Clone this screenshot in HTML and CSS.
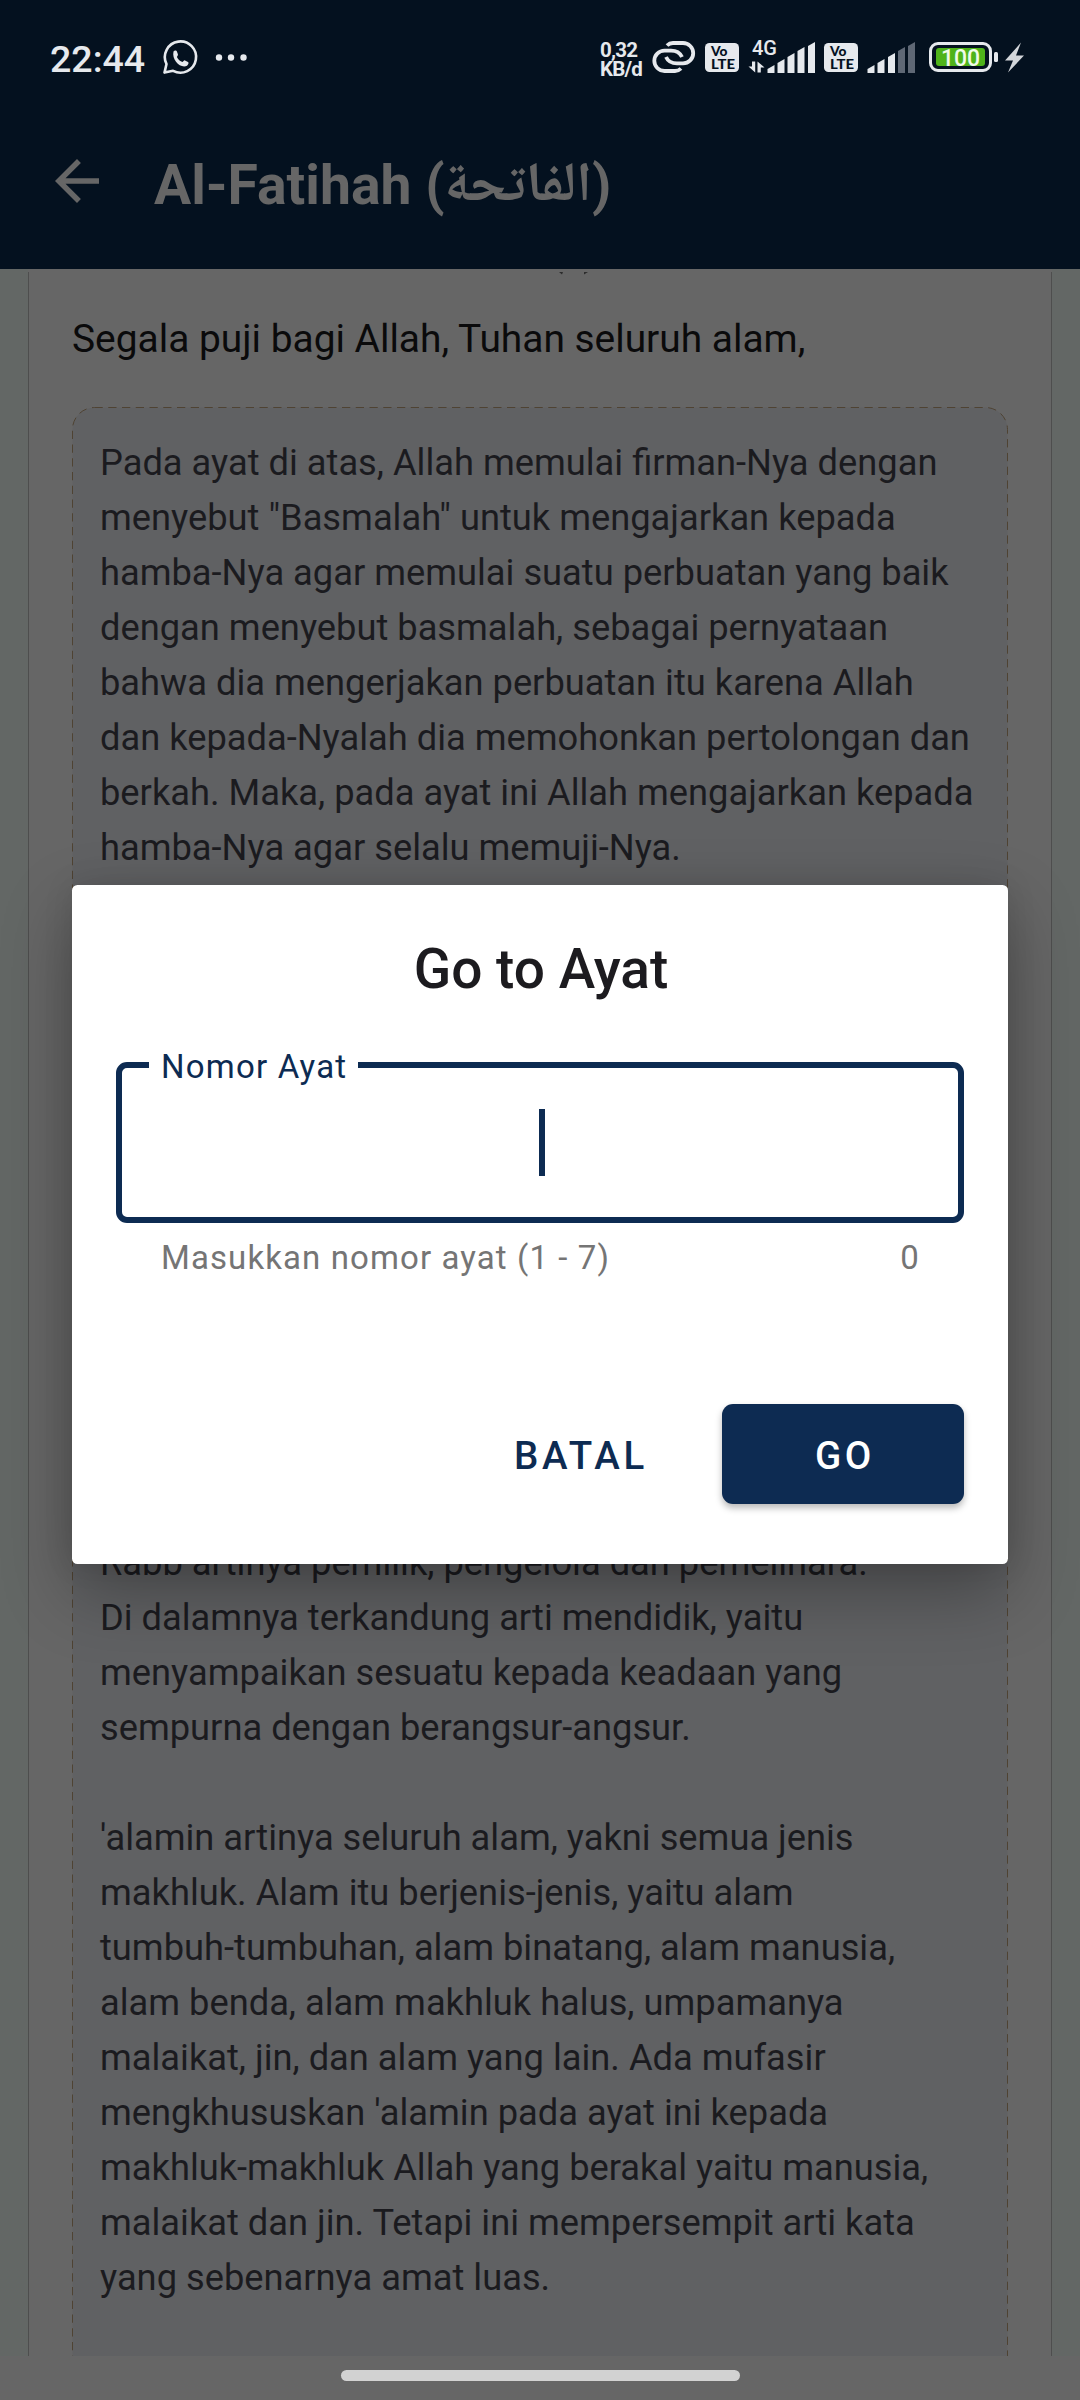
FILE: index.html
```html
<!DOCTYPE html>
<html lang="id">
<head>
<meta charset="utf-8">
<title>Al-Fatihah</title>
<link rel="stylesheet" href="styles.css">
</head>
<body>
<div class="screen">
  <header class="header">
    <div class="status">
      <span class="clock">22:44</span>
      <svg class="status-left" width="90" height="40" viewBox="160 37 90 40">
        <path d="M164.500 72.600l2-8.600a15.600 15.600 0 1 1 6.600 6.800z" fill="none" stroke="#e6e9ed" stroke-width="2.600" stroke-linejoin="round"/>
        <path d="M173.500 51.500c1-1.500 3-1.200 3.400 0l1 2.800c.4 1-.8 2-1 2.800 1.200 2.500 3.200 4.200 5.600 5 .8-.4 1.500-2 2.500-1.700l3 1.600c1.200.8.2 2.800-1 3.700-6 3.400-15.500-5.500-13.500-14.200z" fill="#e6e9ed"/>
        <circle cx="219" cy="57.500" r="3.200" fill="#e6e9ed"/><circle cx="231" cy="57.500" r="3.200" fill="#e6e9ed"/><circle cx="243.500" cy="57.500" r="3.200" fill="#e6e9ed"/>
      </svg>
      <div class="speed"><span>0,32</span><span>KB/d</span></div>
      <svg class="status-right" width="384" height="44" viewBox="646 35 384 44">
        <g fill="none" stroke="#e6e9ed" stroke-width="3.800">
          <path d="M667 45.500q2.500-2.500 6-2.500h10a10.200 10.200 0 0 1 0 20.400h-6q-8 0-11-6.400"/>
          <path d="M681 68.500q-2.500 2.500-6 2.500h-10.500a10.200 10.200 0 0 1 0-20.400h6.500q8 0 11 6.400"/>
        </g>
        <g id="volte">
          <rect x="705" y="43" width="34" height="29" rx="4.500" fill="#e6e9ed"/>
          <text x="711" y="56" textLength="16.500" lengthAdjust="spacingAndGlyphs" class="volte">Vo</text>
          <text x="711" y="69" textLength="24" lengthAdjust="spacingAndGlyphs" class="volte">LTE</text>
        </g>
        <text x="752" y="55" class="net">4G</text>
        <path d="M748.500 66.500h3.500V61.500h3.200v11zM757.500 72.500v-11l7 6h-3.700v5z" fill="#e6e9ed"/>
        <g fill="#e6e9ed">
          <path d="M767.500 73v-4l7-4v8zM777.500 73V63l7-4v14zM787.500 73V57l7-4v20zM797.500 73V51l7-4v26zM808 73V46l7-4v31z"/>
          <path d="M867.500 73v-4l7-4v8zM877.500 73V63l7-4v14zM888 73V57l7-4v20z"/>
          <path d="M898 73V51l7-4v26zM908 73V46l7-4v31z" fill="#5f6875"/>
        </g>
        <use href="#volte" x="119"/>
        <rect x="930.500" y="43.500" width="60" height="27" rx="7.500" fill="none" stroke="#e6e9ed" stroke-width="3"/>
        <rect x="936" y="48" width="49" height="18" rx="3" fill="#4fb31a"/>
        <text x="960.500" y="65.500" class="pct">100</text>
        <rect x="994" y="52" width="4" height="10" rx="1.500" fill="#e6e9ed"/>
        <path d="M1021 42.500l-16 18h8l-5 12 16-17h-8z" fill="#d3d6da"/>
      </svg>
    </div>
    <div class="appbar">
      <svg width="66" height="66" viewBox="0 0 24 24"><path fill="#666" d="M20 11H7.830l5.590-5.590L12 4l-8 8 8 8 1.410-1.410L7.830 13H20z"/></svg>
      <h1>Al-Fatihah (<bdi class="arabic" lang="ar">الفاتحة</bdi>)</h1>
    </div>
  </header>
  <main class="page">
    <article class="card">
      <svg class="marks" width="30" height="3" viewBox="0 0 30 3"><path d="M1 0l4 0-1 2.500zM26 0h4l-4 2.500z" fill="#2c2c2c"/></svg>
      <p class="verse">Segala puji bagi Allah, Tuhan seluruh alam,</p>
      <section class="tafsir">
        <svg class="dashes" width="936" height="2100" viewBox="0 0 936 2100"><rect x="0.500" y="0.500" width="935" height="2090" rx="22" fill="#606163" stroke="#4f4333" stroke-dasharray="8.250 5.500"/></svg>
        <p>Pada ayat di atas, Allah memulai firman-Nya dengan<br>menyebut "Basmalah" untuk mengajarkan kepada<br>hamba-Nya agar memulai suatu perbuatan yang baik<br>dengan menyebut basmalah, sebagai pernyataan<br>bahwa dia mengerjakan perbuatan itu karena Allah<br>dan kepada-Nyalah dia memohonkan pertolongan dan<br>berkah. Maka, pada ayat ini Allah mengajarkan kepada<br>hamba-Nya agar selalu memuji-Nya.</p>
        <p class="later">Rabb artinya pemilik, pengelola dan pemelihara.<br>Di dalamnya terkandung arti mendidik, yaitu<br>menyampaikan sesuatu kepada keadaan yang<br>sempurna dengan berangsur-angsur.</p>
        <p class="next">'alamin artinya seluruh alam, yakni semua jenis<br>makhluk. Alam itu berjenis-jenis, yaitu alam<br>tumbuh-tumbuhan, alam binatang, alam manusia,<br>alam benda, alam makhluk halus, umpamanya<br>malaikat, jin, dan alam yang lain. Ada mufasir<br>mengkhususkan 'alamin pada ayat ini kepada<br>makhluk-makhluk Allah yang berakal yaitu manusia,<br>malaikat dan jin. Tetapi ini mempersempit arti kata<br>yang sebenarnya amat luas.</p>
      </section>
    </article>
  </main>
  <footer class="navbar"><span class="handle"></span></footer>
  <div class="dialog" role="dialog">
    <h2>Go to Ayat</h2>
    <fieldset class="field"><legend>Nomor Ayat</legend><span class="caret"></span></fieldset>
    <div class="helper"><span>Masukkan nomor ayat (1 - 7)</span><span>0</span></div>
    <div class="actions"><span class="cancel">BATAL</span><span class="go">GO</span></div>
  </div>
</div>
</body>
</html>
```
FILE: styles.css
```css
* { box-sizing: border-box; }
body, h1, h2, p { margin: 0; }
body { font-family: Roboto, sans-serif; background: #666; }
.screen { position: relative; width: 1080px; height: 2400px; overflow: hidden; display: flex; flex-direction: column; background: #666; }
.header { height: 269px; flex: none; background: #04111f; }
.status { height: 93px; display: flex; align-items: flex-start; color: #e6e9ed; }
.clock { width: 110px; margin: 37px 0 0 50px; font-size: 37.5px; line-height: 44px; font-weight: 500; }
.status-left { margin-top: 37px; }
.speed { width: 46px; margin: 41px 0 0 350px; display: flex; flex-direction: column; font-size: 20.500px; line-height: 18.500px; font-weight: 700; letter-spacing: -.8px; }
.status-right { margin-top: 35px; }
.volte { font: 900 13.500px Lato, sans-serif; fill: #04111f; }
.net { font: 500 20px Roboto, sans-serif; fill: #e6e9ed; }
.pct { font: 500 23px Roboto, sans-serif; fill: #f0fbe8; text-anchor: middle; }
.appbar { height: 176px; padding: 0 44px; display: flex; align-items: center; color: #666; }
.appbar h1 { margin-left: 44px; padding-top: 11px; font-size: 55.300px; line-height: 66px; font-weight: 700; white-space: nowrap; }
.arabic { display: inline-block; line-height: 1; transform: translateY(-3px); font-family: "Noto Naskh Arabic", "DejaVu Sans", sans-serif; }

.page { height: 2087px; flex: none; overflow: hidden; padding: 3px 28px 0; background: linear-gradient(90deg, #636765 0 28px, #666 28px 1052px, #636765 1052px); }
.card { height: 2200px; padding: 0 43px; border: solid #4e4e4e; border-width: 0 1px; background: #666; display: flex; flex-direction: column; }
.marks { margin-left: 486px; }
.verse { height: 132px; padding-top: 40px; font-size: 38.900px; line-height: 48px; color: #0a0a0b; white-space: nowrap; }
.tafsir { position: relative; padding: 28px 28px; font-size: 36.280px; line-height: 55px; color: #1b1b1f; white-space: nowrap; }
.tafsir p { position: relative; }
.dashes { position: absolute; left: 0; top: 0; }
.tafsir .later { margin-top: 660px; }
.tafsir .next { margin-top: 55px; }

.navbar { height: 44px; display: flex; justify-content: center; padding-top: 14px; }
.handle { width: 399px; height: 11px; border-radius: 6px; background: #d2d2d2; }

.dialog { position: absolute; left: 72px; top: 885px; width: 936px; height: 679px; padding: 0 44px; border-radius: 5.500px; background: #fff; box-shadow: 0 28px 70px rgba(0,0,0,.3), 0 0 30px rgba(0,0,0,.1); }
.dialog h2 { height: 116px; padding: 52px 0 0 2px; font-size: 55px; line-height: 65px; font-weight: 500; text-align: center; color: #1c1b1f; }
.field { height: 180px; margin: 42px 0 0; padding: 0 0 0 3px; border: 6px solid #0d2b52; border-radius: 11px; display: flex; justify-content: center; }
.field legend { margin-left: 24px; padding: 4px 11px 0 12px; font-size: 33px; line-height: 40px; letter-spacing: 1.200px; color: #0d2b52; }
.caret { width: 6px; height: 67px; margin-top: 22px; background: #0d2b52; }
.helper { height: 40px; margin-top: 15px; padding: 0 44px 0 45px; display: flex; justify-content: space-between; font-size: 33px; line-height: 40px; letter-spacing: 1.100px; color: #757575; }
.actions { height: 100px; margin-top: 126px; display: flex; justify-content: flex-end; align-items: flex-start; font-size: 38.500px; line-height: 103px; font-weight: 500; letter-spacing: 3.700px; }
.cancel { color: #0d2b52; margin-right: 74px; }
.go { width: 242px; height: 100px; padding-left: 4px; border-radius: 11px; text-align: center; color: #fff; background: #0d2b52; box-shadow: 0 4px 7px rgba(0,0,0,.28); }
```
